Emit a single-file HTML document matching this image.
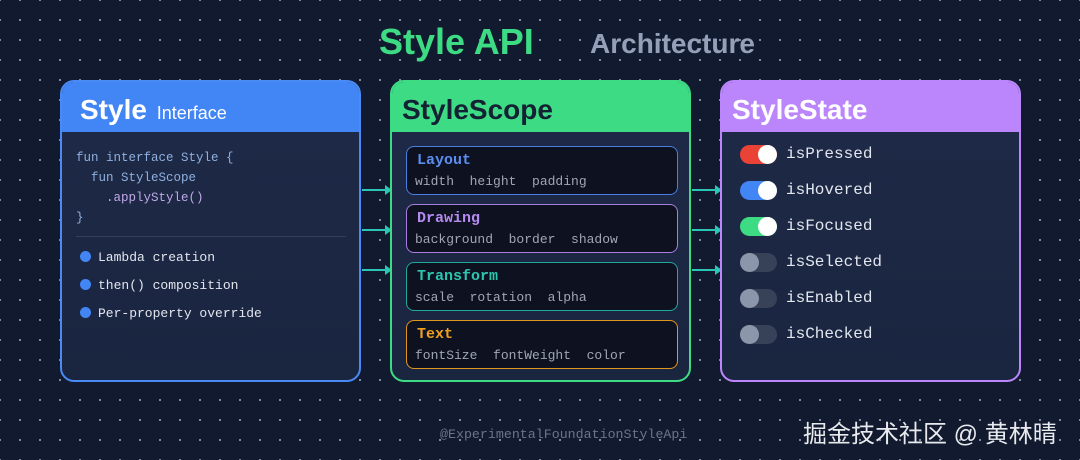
<!DOCTYPE html>
<html><head><meta charset="utf-8"><style>
*{margin:0;padding:0;box-sizing:border-box}
body{width:1080px;height:460px;overflow:hidden;position:relative;font-family:"Liberation Sans",sans-serif;
background-image:radial-gradient(circle,#9aa4b8 0.9px,transparent 1.1px);background-size:20px 20px;background-position:-10px -10px;background-color:#111a2e}
.abs{position:absolute}
.mono{font-family:"Liberation Mono","DejaVu Sans Mono",monospace}
.card{position:absolute;top:80px;width:301px;height:302px;border-radius:14px;border:2px solid;background:linear-gradient(#1e2a47,#1a2540);overflow:hidden}
.hd{height:50px;padding-left:18px;font-weight:bold;font-size:28px;line-height:56px}
.box{position:absolute;left:14px;width:272px;height:49px;border:1px solid;border-radius:8px;background:#0e1220}
.box b{position:absolute;left:10px;top:5px;font-size:15px}
.box span{position:absolute;left:8px;top:27px;font-size:13px;color:#a0a6b2;white-space:pre}
.tg{position:absolute;left:18px;width:37px;height:19px;border-radius:10px}
.tg i{position:absolute;top:0;width:19px;height:19px;border-radius:50%}
.tl{position:absolute;left:64px;font-size:16px;color:#e2e6ee}
.ar{position:absolute;height:2px;background:#2cc6b8;width:28px}
.ar:after{content:"";position:absolute;right:-2px;top:-4px;border-left:7px solid #2cc6b8;border-top:5px solid transparent;border-bottom:5px solid transparent}
</style></head><body>
<div class="abs" style="left:379px;top:21px;font-size:36px;font-weight:bold;color:#3ddc84">Style API</div>
<div class="abs" style="left:590px;top:28px;font-size:28px;font-weight:bold;color:#94a0b8">Architecture</div>

<div class="ar" style="left:362px;top:189px"></div>
<div class="ar" style="left:362px;top:229px"></div>
<div class="ar" style="left:362px;top:269px"></div>
<div class="ar" style="left:692px;top:189px"></div>
<div class="ar" style="left:692px;top:229px"></div>
<div class="ar" style="left:692px;top:269px"></div>

<div class="card" style="left:60px;border-color:#4a8af4">
 <div class="hd" style="background:#4285f4;color:#fff">Style <span style="font-weight:normal;font-size:18px;margin-left:2px">Interface</span></div>
 <div class="mono abs" style="left:14px;top:66px;font-size:12.5px;line-height:20px;color:#8fb0e0;white-space:pre">fun interface Style {
  fun StyleScope
<span style="color:#c0a8e8">    .applyStyle()</span>
}</div>
 <div class="abs" style="left:14px;top:154px;width:270px;height:1px;background:#33405c"></div>
 <div class="mono abs" style="left:18px;top:162px;font-size:13px;line-height:28px;color:#e2e6ee">
  <div><span style="display:inline-block;width:11px;height:11px;border-radius:50%;background:#4285f4;vertical-align:-1px;margin-right:7px"></span>Lambda creation</div>
  <div><span style="display:inline-block;width:11px;height:11px;border-radius:50%;background:#4285f4;vertical-align:-1px;margin-right:7px"></span>then() composition</div>
  <div><span style="display:inline-block;width:11px;height:11px;border-radius:50%;background:#4285f4;vertical-align:-1px;margin-right:7px"></span>Per-property override</div>
 </div>
</div>

<div class="card mono" style="left:390px;border-color:#3ddc84">
 <div class="hd" style="background:#3ddc84;color:#142033;font-family:'Liberation Sans',sans-serif;padding-left:10px">StyleScope</div>
 <div class="box" style="top:64px;border-color:#4a7fe0"><b style="color:#5b8ef0">Layout</b><span>width  height  padding</span></div>
 <div class="box" style="top:122px;border-color:#a87de0"><b style="color:#b48af0">Drawing</b><span>background  border  shadow</span></div>
 <div class="box" style="top:180px;border-color:#20a898"><b style="color:#2cc6b0">Transform</b><span>scale  rotation  alpha</span></div>
 <div class="box" style="top:238px;border-color:#e0961c"><b style="color:#f0a020">Text</b><span>fontSize  fontWeight  color</span></div>
</div>

<div class="card mono" style="left:720px;border-color:#bb86fc">
 <div class="hd" style="background:#bb86fc;color:#fff;font-family:'Liberation Sans',sans-serif;padding-left:10px">StyleState</div>
 <div class="tg" style="top:63px;background:#ea4335"><i style="right:0;background:#fff"></i></div><div class="tl" style="top:63px">isPressed</div>
 <div class="tg" style="top:99px;background:#4285f4"><i style="right:0;background:#fff"></i></div><div class="tl" style="top:99px">isHovered</div>
 <div class="tg" style="top:135px;background:#3ddc84"><i style="right:0;background:#fff"></i></div><div class="tl" style="top:135px">isFocused</div>
 <div class="tg" style="top:171px;background:#374258"><i style="left:0;background:#8c96aa"></i></div><div class="tl" style="top:171px">isSelected</div>
 <div class="tg" style="top:207px;background:#374258"><i style="left:0;background:#8c96aa"></i></div><div class="tl" style="top:207px">isEnabled</div>
 <div class="tg" style="top:243px;background:#374258"><i style="left:0;background:#8c96aa"></i></div><div class="tl" style="top:243px">isChecked</div>
</div>

<div class="abs mono" style="left:440px;top:427px;font-size:13.3px;color:#6b7588">@ExperimentalFoundationStyleApi</div>
<div class="abs" style="left:803px;top:414px;font-size:24px;color:#e8eaee;font-family:'Liberation Sans','Noto Sans CJK SC',sans-serif">掘金技术社区 @ 黄林晴</div>
</body></html>
